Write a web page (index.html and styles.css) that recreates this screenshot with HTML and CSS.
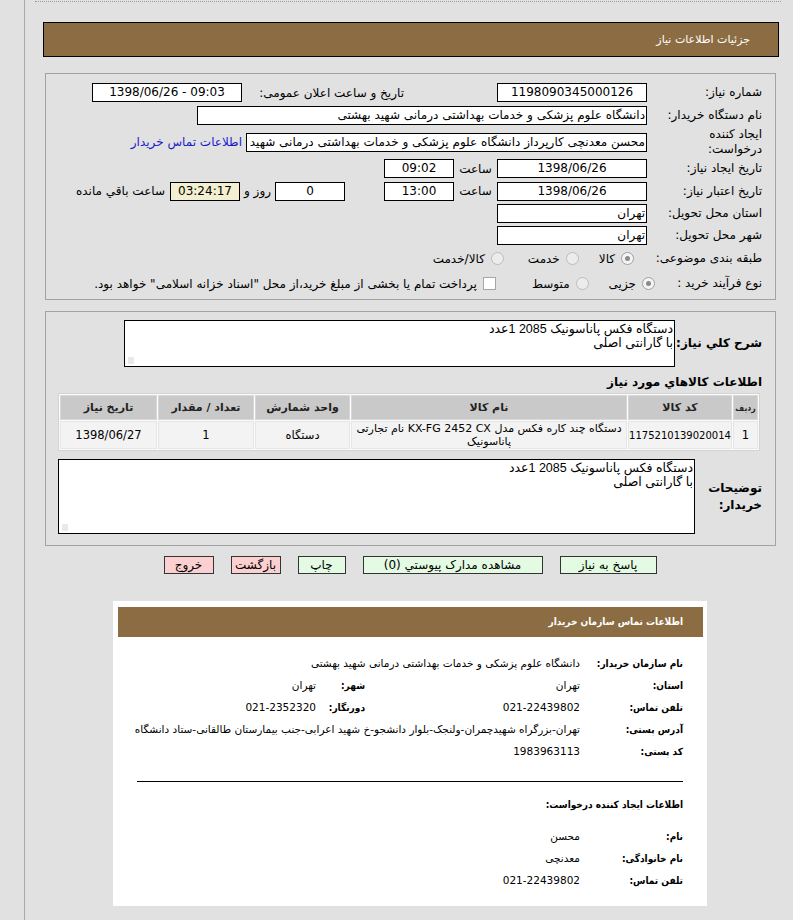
FILE: index.html
```html
<!DOCTYPE html>
<html lang="fa" dir="rtl">
<head>
<meta charset="utf-8">
<title>جزئیات اطلاعات نیاز</title>
<link rel="stylesheet" href="styles.css">
</head>
<body>
<div class="page">
  <div class="topline"></div>
  <div class="titlebar">جزئیات اطلاعات نیاز</div>

  <div class="box s1">
    <div class="row">
      <div class="lbl">شماره نیاز:</div>
      <div class="field w150 c">1198090345000126</div>
      <div class="lbl2">تاریخ و ساعت اعلان عمومی:</div>
      <div class="field w150 c ltr">1398/06/26 - 09:03</div>
    </div>
    <div class="row">
      <div class="lbl">نام دستگاه خریدار:</div>
      <div class="field w450">دانشگاه علوم پزشکی و خدمات بهداشتی درمانی شهید بهشتی</div>
    </div>
    <div class="row r-tall">
      <div class="lbl">ایجاد کننده<br>درخواست:</div>
      <div class="field w401">محسن معدنچی کارپرداز دانشگاه علوم پزشکی و خدمات بهداشتی درمانی شهید بهشتی</div>
      <a class="link" href="#">اطلاعات تماس خریدار</a>
    </div>
    <div class="row">
      <div class="lbl">تاریخ ایجاد نیاز:</div>
      <div class="field w150 c">1398/06/26</div>
      <div class="unit">ساعت</div>
      <div class="field w70 c">09:02</div>
    </div>
    <div class="row r-22">
      <div class="lbl">تاریخ اعتبار نیاز:</div>
      <div class="field w150 c">1398/06/26</div>
      <div class="unit">ساعت</div>
      <div class="field w70 c">13:00</div>
      <div class="field w70 c gap39">0</div>
      <div class="unit2">روز و</div>
      <div class="field w70 c beige">03:24:17</div>
      <div class="remain">ساعت باقي مانده</div>
    </div>
    <div class="row r-22">
      <div class="lbl">استان محل تحویل:</div>
      <div class="field w150">تهران</div>
    </div>
    <div class="row r-22">
      <div class="lbl">شهر محل تحویل:</div>
      <div class="field w150">تهران</div>
    </div>
    <div class="row r-opt">
      <div class="lbl">طبقه بندی موضوعی:</div>
      <span class="radio on o1"></span><span class="otext">کالا</span>
      <span class="radio o2"></span><span class="otext">خدمت</span>
      <span class="radio o3"></span><span class="otext">کالا/خدمت</span>
    </div>
    <div class="row r-opt">
      <div class="lbl lbl-short">نوع فرآیند خرید :</div>
      <span class="radio on o1"></span><span class="otext">جزیی</span>
      <span class="radio o2b"></span><span class="otext">متوسط</span>
      <span class="check"></span><span class="otext">پرداخت تمام یا بخشی از مبلغ خرید،از محل "اسناد خزانه اسلامی" خواهد بود.</span>
    </div>
  </div>

  <div class="box s2">
    <div class="desc-row">
      <div class="blbl w87">شرح کلي نياز:</div>
      <div class="tarea ta1">دستگاه فکس پاناسونیک 2085 1عدد<br>با گارانتی اصلی<span class="grip"></span></div>
    </div>
    <div class="subhead">اطلاعات کالاهاي مورد نياز</div>
    <table class="items">
      <colgroup>
        <col class="cw1"><col class="cw2"><col class="cw3"><col class="cw4"><col class="cw5"><col class="cw6">
      </colgroup>
      <thead>
        <tr>
          <th class="narrow">ردیف</th>
          <th>کد کالا</th>
          <th>نام کالا</th>
          <th>واحد شمارش</th>
          <th>تعداد / مقدار</th>
          <th>تاریخ نیاز</th>
        </tr>
      </thead>
      <tbody>
        <tr>
          <td>1</td>
          <td class="code">1175210139020014</td>
          <td class="name">دستگاه چند کاره فکس مدل KX-FG 2452 CX نام تجارتی پاناسونیک</td>
          <td>دستگاه</td>
          <td>1</td>
          <td>1398/06/27</td>
        </tr>
      </tbody>
    </table>
    <div class="desc-row dr2">
      <div class="blbl w67">توضیحات خریدار:</div>
      <div class="tarea ta2">دستگاه فکس پاناسونیک 2085 1عدد<br>با گارانتی اصلی<span class="grip"></span></div>
    </div>
  </div>

  <div class="buttons">
    <div class="btn green bw1">پاسخ به نیاز</div>
    <div class="btn green bw2">مشاهده مدارک پیوستي (0)</div>
    <div class="btn green bw3">چاپ</div>
    <div class="btn pink bw4">بازگشت</div>
    <div class="btn pink bw4">خروج</div>
  </div>

  <div class="card">
    <div class="cardbar">اطلاعات تماس سازمان خریدار</div>
    <div class="cbody">
      <div class="crow">
        <div class="clbl">نام سازمان خریدار:</div>
        <div class="cval">دانشگاه علوم پزشکی و خدمات بهداشتی درمانی شهید بهشتی</div>
      </div>
      <div class="crow">
        <div class="clbl">استان:</div>
        <div class="cval v1">تهران</div>
        <div class="clbl clbl2">شهر:</div>
        <div class="cval">تهران</div>
      </div>
      <div class="crow">
        <div class="clbl">تلفن تماس:</div>
        <div class="cval v1">021-22439802</div>
        <div class="clbl clbl2">دورنگار:</div>
        <div class="cval">021-2352320</div>
      </div>
      <div class="crow">
        <div class="clbl">آدرس پستی:</div>
        <div class="cval">تهران-بزرگراه شهیدچمران-ولنجک-بلوار دانشجو-خ شهید اعرابی-جنب بیمارستان طالقانی-ستاد دانشگاه</div>
      </div>
      <div class="crow">
        <div class="clbl">کد پستی:</div>
        <div class="cval">1983963113</div>
      </div>
      <div class="sep"></div>
      <div class="chead">اطلاعات ایجاد کننده درخواست:</div>
      <div class="crows2">
        <div class="crow">
          <div class="clbl">نام:</div>
          <div class="cval">محسن</div>
        </div>
        <div class="crow">
          <div class="clbl">نام خانوادگی:</div>
          <div class="cval">معدنچی</div>
        </div>
        <div class="crow">
          <div class="clbl">تلفن تماس:</div>
          <div class="cval">021-22439802</div>
        </div>
      </div>
    </div>
  </div>
</div>
</body>
</html>
```

FILE: styles.css
```css
* { box-sizing: border-box; }
html, body { margin: 0; padding: 0; }
body {
  background: #e1e1e1;
  font-family: "DejaVu Sans", sans-serif;
  font-size: 12px;
  color: #000;
  direction: rtl;
}
.page {
  margin-left: 24px;
  border-left: 1px solid #a9a9a9;
  min-height: 920px;
  padding-top: 1px;
}
.topline {
  border-top: 1px dotted #9a9a9a;
  margin: 0 12px 0 10px;
}
.titlebar {
  margin: 20px 14px 0 18px;
  height: 35px;
  background: #8c6d43;
  border: 1px solid #000;
  color: #fff;
  font-size: 11px;
  line-height: 33px;
  padding-right: 28px;
}
.box {
  margin: 16px 17px 0 20px;
  border: 1px solid #a3a3a3;
}
.s1 { padding: 7px 13px 3px 0; }
.row {
  display: flex;
  align-items: center;
  height: 23px;
  white-space: nowrap;
}
.r-tall { height: 30px; }
.r-22 { height: 22px; }
.lbl { width: 115px; flex: none; line-height: 15px; }
.lbl-short { width: 94px; }
.lbl2 { width: 162px; flex: none; margin-right: 93px; }
.field {
  flex: none;
  height: 19px;
  border: 1px solid #000;
  background: #fff;
  line-height: 17px;
  padding: 0 1px;
  white-space: nowrap;
  overflow: hidden;
  font-size: 12px;
}
.c { text-align: center; }
.ltr { direction: ltr; }
.w150 { width: 150px; }
.w450 { width: 450px; }
.w401 { width: 401px; }
.w70 { width: 70px; }
.gap39 { margin-right: 39px; }
.beige { background: #f3efd0; }
.unit { width: 43px; flex: none; text-align: center; }
.unit2 { width: 35px; flex: none; text-align: center; }
.remain { margin-right: 5px; }
.link { color: #1a1acc; text-decoration: none; margin-right: 4px; }

.r-opt { height: 25px; }
.radio {
  flex: none;
  width: 13px;
  height: 13px;
  border-radius: 50%;
  border: 1px solid #bcbcbc;
  background: #ececec;
  position: relative;
}
.radio.on { border-color: #a0a0a0; background: #f4f4f4; }
.radio.on::after {
  content: "";
  position: absolute;
  left: 3px; top: 3px;
  width: 5px; height: 5px;
  border-radius: 50%;
  background: #8a8a8a;
}
.o1 { margin-right: 13px; }
.o2 { margin-right: 20px; }
.o3 { margin-right: 24px; }
.o2b { margin-right: 20px; }
.check {
  flex: none;
  width: 13px;
  height: 13px;
  border: 1px solid #a6a6a6;
  background: #fff;
  margin-right: 36px;
}
.otext { margin-right: 6px; }

.s2 { margin-top: 11px; padding: 8px 13px 11px 0; }
.desc-row { display: flex; align-items: center; }
.blbl { flex: none; font-weight: bold; font-size: 12px; line-height: 17px; }
.w87 { width: 87px; }
.w67 { width: 67px; }
.tarea {
  position: relative;
  flex: none;
  background: #fff;
  border: 1px solid #000;
  font-family: "Liberation Sans", "DejaVu Sans", sans-serif;
  font-size: 12.5px;
  line-height: 14px;
  padding: 1px 1px;
}
.ta1 { width: 551px; height: 47px; }
.ta2 { width: 637px; height: 75px; }
.dr2 { margin-top: 8px; }
.grip {
  position: absolute;
  left: 3px;
  bottom: 2px;
  width: 6px;
  height: 7px;
  background-image: radial-gradient(circle, #b8b8b8 0.5px, transparent 0.8px);
  background-size: 2px 2px;
}
.subhead {
  font-weight: bold;
  font-size: 12px;
  margin-top: 7px;
  line-height: 16px;
}
.items {
  width: 700px;
  table-layout: fixed;
  margin: 3px 2px 0 0;
  border-collapse: separate;
  border-spacing: 1px;
  background: #fbfbfb;
  border: 1px solid #d3d3d3;
}
.items th {
  background: #c9c9c9;
  font-weight: bold;
  font-size: 11px;
  color: #222;
  height: 25px;
  padding: 0 2px;
  border: 1px solid #d8d8d8;
  white-space: nowrap;
}
.items th.narrow { padding: 0; font-size: 8.5px; font-stretch: condensed; }
.items td {
  background: #f3f3f3;
  text-align: center;
  font-size: 11.5px;
  height: 27px;
  padding: 0 3px;
  line-height: 13px;
  border: 1px solid #e6e6e6;
}
.items td.code { font-size: 10px; padding: 0; }
.items td.name { font-size: 11px; }
.cw1 { width: 25px; }
.cw2 { width: 104px; }
.cw3 { width: 276px; }
.cw4 { width: 95px; }
.cw5 { width: 96px; }
.cw6 { width: 97px; }

.buttons {
  display: flex;
  justify-content: center;
  gap: 17px;
  margin-top: 10px;
  padding-left: 2px;
}
.btn {
  height: 18px;
  border: 1px solid #333;
  font-size: 12px;
  line-height: 16px;
  text-align: center;
}
.green { background: #e2fbe2; }
.pink { background: #fcd0d0; }
.bw1 { width: 97px; }
.bw2 { width: 180px; }
.bw3 { width: 48px; }
.bw4 { width: 50px; }

.card {
  margin: 27px 86px 0 88px;
  height: 305px;
  background: #fff;
  padding: 6px 4px 0 5px;
}
.cardbar {
  height: 30px;
  background: #8c6d43;
  color: #fff;
  font-weight: bold;
  font-size: 10px;
  font-stretch: condensed;
  line-height: 30px;
  padding-right: 20px;
}
.cbody { padding: 15px 20px 0 19px; }
.crow {
  display: flex;
  align-items: center;
  height: 22px;
  white-space: nowrap;
}
.clbl { width: 103px; flex: none; font-weight: bold; font-size: 10px; font-stretch: condensed; }
.clbl2 { width: 49px; }
.cval { font-size: 10.5px; }
.v1 { width: 215px; flex: none; }
.sep { border-top: 1px solid #000; margin-top: 19px; }
.chead { font-weight: bold; font-size: 10px; font-stretch: condensed; margin-top: 12px; line-height: 22px; }
.crows2 { margin-top: 9px; }
```
